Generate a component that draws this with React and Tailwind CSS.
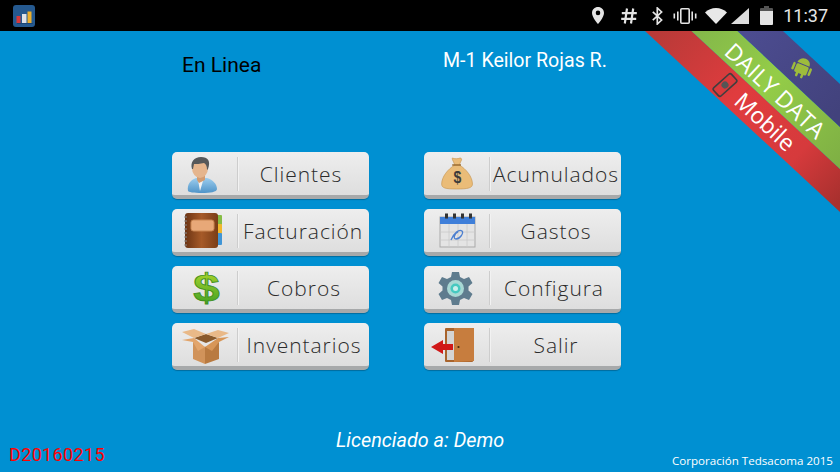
import React from 'react';

// Iconos de la barra de estado
function StatusIcons() {
  return (
    <div className="flex items-center pr-[12px] text-[#e4e4e4]">
      <svg width="12" height="17" viewBox="0 0 12 17">
        <path fillRule="evenodd" fill="#e4e4e4" d="M6 0C2.7 0 0 2.6 0 5.9 0 10.200 6 17 6 17s6-6.800 6-11.100C12 2.600 9.300 0 6 0zm0 8.200a2.300 2.300 0 1 1 0-4.600 2.300 2.300 0 0 1 0 4.600z" />
      </svg>
      <svg className="ml-[17px]" width="16" height="16" viewBox="0 0 16 16">
        <path fill="none" stroke="#e4e4e4" strokeWidth="2.200" d="M6 0.500 3.800 15.500M12.200 0.500 10 15.500M0.800 5.200H15.800M0.200 10.800H15.200" />
      </svg>
      <svg className="ml-[15px]" width="11" height="18" viewBox="0 0 11 18">
        <path fill="none" stroke="#e4e4e4" strokeWidth="1.700" d="M0.800 4.800 9.600 13 5.300 17V1L9.600 5 0.800 13.200" />
      </svg>
      <svg className="ml-[10px]" width="24" height="16" viewBox="0 0 24 16">
        <rect x="7.800" y="0.800" width="8.400" height="14.400" rx="1" fill="none" stroke="#e4e4e4" strokeWidth="1.600" />
        <path fill="#e4e4e4" d="M4 3.500h1.600v9H4zM18.400 3.500H20v9h-1.600zM0.500 5.500h1.600v5H0.500zM21.900 5.500h1.600v5h-1.600z" />
      </svg>
      <svg className="ml-[8px]" width="22" height="16" viewBox="0 0 22 16">
        <path fill="#e8e8e8" d="M0 4.400C3 1.700 6.800 0 11 0s8 1.700 11 4.400L11 16z" />
      </svg>
      <svg className="ml-[4px]" width="18" height="16" viewBox="0 0 18 16">
        <path fill="#dddddd" d="M18 0V16H0z" />
      </svg>
      <svg className="ml-[11px]" width="13" height="19" viewBox="0 0 13 19">
        <path fill="#555555" d="M4 0h5v2h3a1 1 0 0 1 1 1v3H0V3a1 1 0 0 1 1-1h3z" />
        <path fill="#e4e4e4" d="M0 5h13v13a1 1 0 0 1-1 1H1a1 1 0 0 1-1-1z" />
      </svg>
      <span className="ml-[10px] text-[18px] leading-none font-['Roboto',sans-serif] text-[#e6e6e6]">11:37</span>
    </div>
  );
}

function AppIcon() {
  return (
    <svg width="22" height="22" viewBox="0 0 22 22" className="ml-[13px]">
      <rect width="22" height="22" rx="3" fill="#25598f" />
      <path d="M4 18h16v1H4z" fill="#1c4674" />
      <rect x="3.500" y="11" width="4" height="7" fill="#d8383a" />
      <rect x="9" y="9" width="4.500" height="9" fill="#dfe3e8" />
      <rect x="14.500" y="6.500" width="4" height="11.500" fill="#edb02d" />
    </svg>
  );
}

const IconClientes = () => (
  <>
    <defs>
      <linearGradient id="shirt" x1="0" y1="0" x2="0" y2="1">
        <stop offset="0" stopColor="#9ccdee" />
        <stop offset="1" stopColor="#4f94c8" />
      </linearGradient>
    </defs>
    <path d="M16 39c-1-6 2-11 8-13h11c6 2 10 6 10 11 0 3-7 4-15 4s-14-1-14-2z" fill="url(#shirt)" />
    <path d="M26 28l2 11 3-10z" fill="#f2f2f2" />
    <path d="M25 22h8v6l-6 3-2-3z" fill="#d29c72" />
    <ellipse cx="28" cy="16" rx="8" ry="10" fill="#e5b58d" />
    <path d="M20 17c-2-7 2-12 9-12s10 4 7 12l-1 1c0-4-1-6-3-7-4 1-8 1-10 1l-1 5z" fill="#55585a" />
  </>
);

const IconFacturacion = () => (
  <>
    <defs>
      <linearGradient id="book" x1="0" y1="0" x2="1" y2="0">
        <stop offset="0" stopColor="#6b3414" />
        <stop offset="0.5" stopColor="#a65a28" />
        <stop offset="1" stopColor="#7a3e18" />
      </linearGradient>
    </defs>
    <rect x="44" y="6" width="6" height="10" rx="1" fill="#86bd45" />
    <rect x="44" y="15" width="6" height="10" rx="1" fill="#f0b72c" />
    <rect x="44" y="24" width="6" height="12" rx="1" fill="#3f95d6" />
    <rect x="13" y="4" width="33" height="35" rx="3" fill="url(#book)" />
    <rect x="19" y="11" width="23" height="11" rx="2.500" fill="#e8a878" stroke="#c98653" />
    <path d="M12 8h3M12 12h3M12 16h3M12 20h3M12 24h3M12 28h3M12 32h3M12 36h3" stroke="#8d8d8d" strokeWidth="1" />
  </>
);

const IconCobros = () => (
  <>
    <defs>
      <linearGradient id="dollar" x1="0" y1="0" x2="0" y2="1">
        <stop offset="0" stopColor="#b9dc2c" />
        <stop offset="1" stopColor="#359a22" />
      </linearGradient>
    </defs>
    <text x="0" y="35" transform="translate(34.500 0) scale(1.25 1)" textAnchor="middle" fontFamily="'Liberation Sans', sans-serif" fontWeight="700" fontSize="38" fill="url(#dollar)" stroke="#3f8f1f" strokeWidth="0.800">$</text>
  </>
);

const IconInventarios = () => (
  <>
    <path d="M22 15 34 11 46 15 34 20z" fill="#8a5a2c" />
    <path d="M21 19 33 24V41L21 36z" fill="#d1935a" />
    <path d="M33 24 47 19V36L33 41z" fill="#b97a40" />
    <path d="M22 15 10 9 22 6 34 11z" fill="#e9b988" />
    <path d="M46 15 57 10 46 7 34 11z" fill="#e9b988" />
    <path d="M21 19 10 17 22 15 33 24 26 28z" fill="#e2a56c" />
    <path d="M47 19 57 14 46 15 33 24 40 28z" fill="#d79658" />
  </>
);

const IconAcumulados = () => (
  <g transform="translate(33.500 37) scale(0.88 1) translate(-33 -37)">
    <path d="M27 6c3 1 6 1 9 0 2 0 2 2 1 3l-2 4c8 4 15 12 15 19 0 4-5 5-18 5s-17-1-17-5c0-7 7-15 15-19l-2-4c-1-1-1-3-1-3z" fill="#eabc78" stroke="#c89550" strokeWidth="0.700" />
    <path d="M27 13h10" stroke="#9b6c30" strokeWidth="1.500" />
    <text x="33" y="31" textAnchor="middle" fontFamily="'Liberation Sans', sans-serif" fontWeight="700" fontSize="16" fill="#3a3a3a">$</text>
  </g>
);

const IconGastos = () => (
  <>
    <rect x="16" y="8" width="35" height="30" fill="#e4e4e4" stroke="#a9a9a9" />
    <rect x="16" y="8" width="35" height="7" fill="#3f7fd9" />
    <path d="M16 23h35M16 31h35M25 15v23M34 15v23M43 15v23" stroke="#c9c9c9" strokeWidth="0.800" />
    <path d="M21 4.500h3v5h-3zM29 4.500h3v5h-3zM37 4.500h3v5h-3zM45 4.500h3v5h-3z" fill="#333333" />
    <path d="M27 31c3-7 8-11 11-9 2 2-2 8-6 8-3 0-2-5 2-7" fill="none" stroke="#4c7fd0" strokeWidth="1.300" />
  </>
);

const IconConfigura = () => (
  <>
    <path fill="#5f7c8e" d="M28 6h7l1 5 4 2 5-2 3.500 6-4 3.500v4l4 3.500L45 34l-5-2-4 2-1 5h-7l-1-5-4-2-5 2-3.500-6 4-3.500v-4l-4-3.500L18 11l5 2 4-2z" />
    <circle cx="31.500" cy="22.500" r="8.500" fill="#a8d8d4" />
    <circle cx="31.500" cy="22.500" r="5" fill="#46c9c0" />
    <circle cx="31.500" cy="22.500" r="2.500" fill="#c9f0ec" />
  </>
);

const IconSalir = () => (
  <>
    <rect x="21" y="5" width="28" height="34" rx="1" fill="#a8632c" />
    <rect x="23" y="8" width="8" height="29" fill="#d4d4d4" />
    <path d="M30 5H50V38L30 39z" fill="#c77d3e" />
    <circle cx="34.500" cy="24" r="1.100" fill="#4a2a10" />
    <path d="M7 24 19 17V21H29V27H19V31z" fill="#d01818" />
  </>
);

const botones = [
  { label: 'Clientes', Icon: IconClientes, nudge: '-translate-x-[3px]' },
  { label: 'Acumulados', Icon: IconAcumulados, nudge: '' },
  { label: 'Facturación', Icon: IconFacturacion, nudge: '-translate-x-[1px]' },
  { label: 'Gastos', Icon: IconGastos, nudge: '' },
  { label: 'Cobros', Icon: IconCobros, nudge: '' },
  { label: 'Configura', Icon: IconConfigura, nudge: '-translate-x-[2px]' },
  { label: 'Inventarios', Icon: IconInventarios, nudge: '' },
  { label: 'Salir', Icon: IconSalir, nudge: '' },
];

function MenuButton({ label, Icon, nudge }) {
  return (
    <button className="flex h-[47px] w-[197px] items-center rounded-[5px] border-b-[4px] border-[#a7a9aa] bg-gradient-to-b from-[#eeeeee] to-[#dedede] shadow-[0_1px_1px_rgba(0,0,0,0.25)]">
      <svg width="65" height="43" viewBox="0 0 65 43" className="shrink-0">
        <Icon />
      </svg>
      <div className="h-[34px] w-[2px] shrink-0 border-l border-[#cdcdcd] bg-[#f2f2f2]" />
      <span className={`flex-1 translate-y-[1px] whitespace-nowrap text-center font-['Open_Sans',sans-serif] text-[21px] font-light tracking-[0.045em] text-[#2b2b2b] ${nudge}`}>
        {label}
      </span>
    </button>
  );
}

// Cinta de la esquina, va encima del contenido
function Ribbon() {
  return (
    <svg className="absolute right-0 top-[31px]" width="195" height="182" viewBox="645 31 195 182">
      <defs>
        <linearGradient id="red" gradientUnits="userSpaceOnUse" x1="660" y1="31" x2="840" y2="200">
          <stop offset="0" stopColor="#b93a38" />
          <stop offset="0.4" stopColor="#e03c3e" />
          <stop offset="0.75" stopColor="#d63a3c" />
          <stop offset="1" stopColor="#a8302e" />
        </linearGradient>
        <linearGradient id="green" gradientUnits="userSpaceOnUse" x1="700" y1="31" x2="840" y2="160">
          <stop offset="0" stopColor="#84b84a" />
          <stop offset="0.45" stopColor="#94cd48" />
          <stop offset="1" stopColor="#7fb044" />
        </linearGradient>
        <linearGradient id="blue" gradientUnits="userSpaceOnUse" x1="750" y1="31" x2="840" y2="110">
          <stop offset="0" stopColor="#4c4c90" />
          <stop offset="1" stopColor="#42427c" />
        </linearGradient>
      </defs>
      <polygon points="645,31 691.500,31 840,169 840,212" fill="url(#red)" />
      <polygon points="691.500,31 737.500,31 840,127 840,169" fill="url(#green)" />
      <polygon points="737.500,31 783,31 840,84 840,127" fill="url(#blue)" />
      <text x="775" y="99" transform="rotate(43 775 91)" textAnchor="middle" fontFamily="'Open Sans', sans-serif" fontSize="23" fill="#ffffff">DAILY DATA</text>
      <text x="765" y="130" transform="rotate(43 765 122)" textAnchor="middle" fontFamily="'Open Sans', sans-serif" fontSize="23" fill="#ffffff">Mobile</text>
      {/* android */}
      <g transform="rotate(22 802 68)" fill="#9dbb3c">
        <path d="M795.500 64a6.500 6 0 0 1 13 0z" />
        <rect x="795.500" y="65" width="13" height="9" rx="1.500" />
        <rect x="792" y="65" width="2.500" height="8" rx="1.250" />
        <rect x="809.500" y="65" width="2.500" height="8" rx="1.250" />
        <rect x="798" y="73" width="2.500" height="5" rx="1.250" />
        <rect x="803.500" y="73" width="2.500" height="5" rx="1.250" />
      </g>
      {/* telefono */}
      <g transform="rotate(-42 725 85)">
        <rect x="713" y="79.500" width="24" height="11" rx="2" fill="#d83a3c" stroke="#3f3f3f" strokeWidth="1.600" />
        <circle cx="725" cy="85" r="3.500" fill="#555555" />
      </g>
    </svg>
  );
}

export default function App() {
  return (
    <div className="relative flex h-[472px] w-[840px] flex-col overflow-hidden bg-[#0090d2]">
      <div className="flex h-[31px] shrink-0 items-center justify-between bg-black">
        <AppIcon />
        <StatusIcons />
      </div>

      <div className="flex flex-1 flex-col">
        <div className="flex h-[121px] shrink-0 items-start pl-[182px] pt-[20px]">
          <span className="w-[261px] translate-y-[1px] font-['Roboto',sans-serif] text-[21px] leading-[27px] text-black">En Linea</span>
          <span className="font-['Roboto',sans-serif] text-[19.6px] leading-[20px] text-white">M-1 Keilor Rojas R.</span>
        </div>

        <div className="ml-[172px] grid grid-cols-[197px_197px] gap-x-[55px] gap-y-[10px]">
          {botones.map((b) => (
            <MenuButton key={b.label} {...b} />
          ))}
        </div>

        <div className="relative flex flex-1 items-end justify-between pb-[3px] pl-[9px] pr-[7px]">
          <span className="mb-[4px] font-['Roboto',sans-serif] text-[18px] leading-[20px] tracking-[0.02em] text-[#ff0000]">D20160215</span>
          <span className="font-['Open_Sans',sans-serif] text-[11.6px] leading-[16px] text-white">Corporación Tedsacoma 2015</span>
          <span className="absolute left-[336px] top-[60px] font-['Roboto',sans-serif] text-[19.8px] italic leading-[22px] text-white">Licenciado a: Demo</span>
        </div>
      </div>

      <Ribbon />
    </div>
  );
}
